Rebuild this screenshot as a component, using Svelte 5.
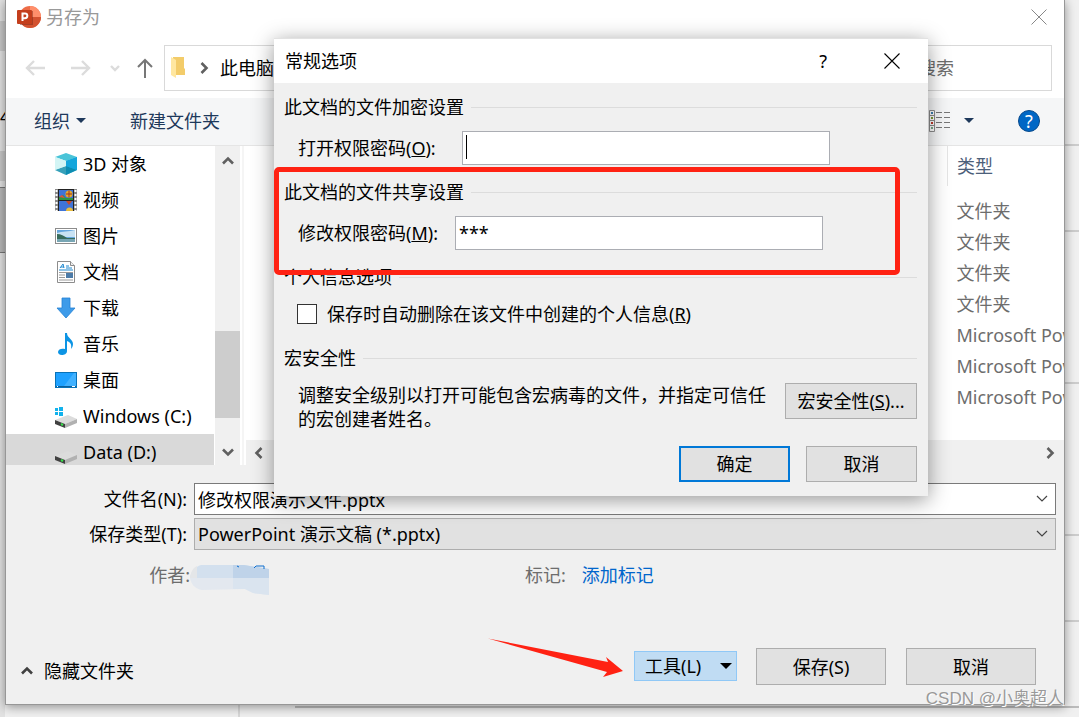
<script lang="ts">
  type Place = { icon: string; name: string; selected?: boolean };

  const places: Place[] = [
    { icon: 'cube', name: '3D 对象' },
    { icon: 'video', name: '视频' },
    { icon: 'picture', name: '图片' },
    { icon: 'document', name: '文档' },
    { icon: 'download', name: '下载' },
    { icon: 'music', name: '音乐' },
    { icon: 'desktop', name: '桌面' },
    { icon: 'system', name: 'Windows (C:)' },
    { icon: 'drive', name: 'Data (D:)', selected: true },
  ];

  const types = [
    '文件夹',
    '文件夹',
    '文件夹',
    '文件夹',
    'Microsoft PowerPoint',
    'Microsoft PowerPoint',
    'Microsoft PowerPoint',
  ];

  let fileName = $state('修改权限演示文件.pptx');
  let openPassword = $state('');
  let modifyPassword = $state('***');
  let removeInfo = $state(false);
</script>

{#snippet placeIcon(kind: string)}
  <svg class="place-icon" width="24" height="24" viewBox="0 0 24 24" aria-hidden="true">
    {#if kind === 'cube'}
      <path d="M1 5 12 1l11 4-11 4z" fill="#4ac4d8" />
      <path d="M1 5l11 4v14L1 18z" fill="#b9eef2" />
      <path d="M23 5l-11 4v14l11-5z" fill="#12a5d6" />
      <path d="M1 18l11-4 11 4-11 5z" fill="#0c86a6" opacity=".75" />
      <path d="M1 5l11 4v5L1 18z" fill="#d3f5f5" />
      <path d="M12 9l11-4v13l-11-4z" fill="#14a6dc" />
    {:else if kind === 'video'}
      <rect x="1" y="1" width="22" height="22" fill="#8a8a8a" />
      <path d="M2.500 2v21M21.500 2v21" stroke="#fff" stroke-width="2" stroke-dasharray="2 2" />
      <rect x="4" y="1" width="16" height="22" fill="#222" />
      <rect x="5" y="2" width="14" height="10" fill="#3f74d8" />
      <rect x="5" y="13" width="14" height="10" fill="#3f74d8" />
      <path d="M5 9l4-2 3 3h7v2H5z" fill="#2b9444" />
      <path d="M5 9l3-2 3 3z" fill="#e05040" />
      <circle cx="15" cy="6" r="3.500" fill="#e6a92c" />
      <path d="M15 2.500v7M12 6h6" stroke="#a33420" />
      <path d="M12 13h6l-3 4z" fill="#c94a28" />
      <path d="M12 23a3.500 3.500 0 0 1 7 0z" fill="#e9bc3c" />
    {:else if kind === 'picture'}
      <rect x="1.500" y="4.500" width="21" height="15" fill="#fff" stroke="#8c8c8c" />
      <rect x="3" y="6" width="18" height="12" fill="#66a7de" />
      <path d="M3 9c5-2 12-1 18-3v7H3z" fill="#c8e2f3" />
      <path d="M3 10c4 0 7 2 10 4h8v1H3z" fill="#386c5c" />
      <path d="M3 15h18v3H3z" fill="#78a6b4" />
    {:else if kind === 'document'}
      <path d="M3.500 1.500h13l4 4v17h-17z" fill="#fff" stroke="#8c8c8c" />
      <path d="M16.500 1.500v4h4" fill="#eee" stroke="#8c8c8c" />
      <path d="M6 8l3-4 1 4M7 7h3M12 6h3M12 8h6M5 10h14" fill="none" stroke="#1e88cf" />
      <path d="M5 12.500h14M5 15h6M5 17.500h6M5 20h14" stroke="#9a9a9a" />
      <rect x="12" y="13" width="7" height="5" fill="#4c7ba8" />
    {:else if kind === 'download'}
      <path d="M8 2h8v10h5l-9 10-9-10h5z" fill="#3e9be9" stroke="#2582d4" stroke-width=".8" />
    {:else if kind === 'music'}
      <path d="M11 1h2c0 5 6 6 6 11 0 2-1 4-2 5 1-5-1-7-4-8v10c0 3-3 4-5 4-3 0-4-2-4-3 0-3 4-4 7-3z" fill="#0c94e4" />
    {:else if kind === 'desktop'}
      <rect x="1.500" y="4.500" width="21" height="15" fill="#1ea1ff" stroke="#0872b8" />
      <path d="M10 18 20 5h2v13z" fill="#41b1ff" />
      <path d="M2 18.500h20" stroke="#0b5f9c" />
      <path d="M3 18.500h1M18 18.500h3" stroke="#fff" />
    {:else}
      {#if kind === 'system'}
        <path d="M1 4h3v3H1zM5 3h4v4H5zM1 8h3v3H1zM5 8h4v4H5z" fill="#12b2ec" />
      {/if}
      <path d="M1 16l13-5 9 4-12 5z" fill="#dcdcdc" />
      <path d="M1 16l10 4v4L1 20z" fill="#414141" />
      <path d="M11 20l12-5v4l-12 5z" fill="#b1b1b1" />
      <path d="M7 20l2 1" stroke="#36e04a" stroke-width="2" />
    {/if}
  </svg>
{/snippet}

{#snippet chevron(dir: string)}
  <svg class="chevron {dir}" width="14" height="14" viewBox="0 0 14 14" aria-hidden="true">
    <path d="M2 9.500 7 4.500l5 5" fill="none" stroke="currentColor" stroke-width="2.600" />
  </svg>
{/snippet}

<div class="screen">
  <div class="edge left" aria-hidden="true">
    <i class="band one"></i>
    <span>4</span>
    <i class="band two"></i>
    <i class="band three"></i>
  </div>
  <div class="edge right" aria-hidden="true">
    <i class="first"></i><i></i><i class="tall"></i><i class="tall"></i><i></i>
  </div>
  <div class="edge bottom" aria-hidden="true"></div>

  <main class="window">
    <header class="titlebar">
      <svg width="24" height="24" viewBox="0 0 24 24" aria-hidden="true">
        <circle cx="13" cy="12" r="11" fill="#ed6c47" />
        <path d="M13 1a11 11 0 0 1 11 11H13z" fill="#ff8f6b" />
        <path d="M2 12h22a11 11 0 0 1-22 0z" fill="#d35230" />
        <rect x="3" y="6" width="13" height="14" fill="#7c2a17" opacity=".5" />
        <rect x="0" y="5" width="15" height="14" rx="1" fill="#c43e1c" />
        <path d="M5.500 16V8.500H8a2.300 2.300 0 0 1 0 4.700H5.500" fill="none" stroke="#fff" stroke-width="2" />
      </svg>
      <h1>另存为</h1>
      <button class="plain close" aria-label="关闭">
        <svg width="16" height="16" viewBox="0 0 16 16"><path d="M.5.5l15 15M15.500.5l-15 15" stroke="#888" /></svg>
      </button>
    </header>

    <nav class="nav">
      <button class="plain" aria-label="后退" disabled>
        <svg width="20" height="20" viewBox="0 0 20 20"><path d="M20 10H2M9 3l-7 7 7 7" fill="none" stroke="#dcdcdc" stroke-width="2.400" /></svg>
      </button>
      <button class="plain forward" aria-label="前进" disabled>
        <svg width="20" height="20" viewBox="0 0 20 20"><path d="M0 10h18M11 3l7 7-7 7" fill="none" stroke="#dcdcdc" stroke-width="2.400" /></svg>
      </button>
      <button class="plain recent" aria-label="最近位置" disabled>
        <svg width="10" height="8" viewBox="0 0 10 8"><path d="M1 2l4 4 4-4" fill="none" stroke="#dcdcdc" stroke-width="2.400" /></svg>
      </button>
      <button class="plain up" aria-label="向上">
        <svg width="16" height="20" viewBox="0 0 16 20"><path d="M8 20V2M1 9l7-7 7 7" fill="none" stroke="#777" stroke-width="2" /></svg>
      </button>
      <div class="address">
        <svg width="14" height="22" viewBox="0 0 14 22" aria-hidden="true">
          <path d="M2 0h11v11l1 1v6H2z" fill="#f3cc6a" />
          <path d="M0 0l5 3v18l-5-3z" fill="#ffe7a0" />
        </svg>
        {@render chevron('next')}
        <span>此电脑</span>
      </div>
      <input class="search" type="search" placeholder="搜索" aria-label="搜索" />
    </nav>

    <div class="toolbar">
      <button class="plain">组织<i class="caret"></i></button>
      <button class="plain">新建文件夹</button>
      <button class="plain view" aria-label="视图">
        <svg width="22" height="22" viewBox="0 0 22 22">
          <path d="M.5.500h5v21h-5zM.5 5.500h5M.5 10.500h5M.5 15.500h5" fill="#fff" stroke="#8d8d8d" />
          <path d="M2 2h2v2H2z" fill="#3c7fb1" /><path d="M2 7h2v2H2z" fill="#7d9a35" />
          <path d="M2 12h2v2H2z" fill="#c0392b" /><path d="M2 17h2v2H2z" fill="#79a88a" />
          <path d="M7 2.500h15M7 7.500h15M7 12.500h15M7 17.500h15" stroke="#777" stroke-dasharray="6 2" />
        </svg>
        <i class="caret"></i>
      </button>
      <button class="help" aria-label="帮助">?</button>
    </div>

    <div class="browser">
      <ul class="places">
        {#each places as place}
          <li class:selected={place.selected}>
            {@render placeIcon(place.icon)}
            {place.name}
          </li>
        {/each}
      </ul>
      <div class="scrollbar" aria-hidden="true">
        {@render chevron('top')}
        <div class="thumb"></div>
        {@render chevron('down')}
      </div>
      <div class="files">
        <table>
          <thead>
            <tr><th>类型</th></tr>
          </thead>
          <tbody>
            {#each types as type}
              <tr><td>{type}</td></tr>
            {/each}
          </tbody>
        </table>
        <div class="hscroll" aria-hidden="true">
          {@render chevron('prev')}
          {@render chevron('next')}
        </div>
      </div>
    </div>

    <section class="form">
      <label for="file-name">文件名(N):</label>
      <div class="combo">
        <input id="file-name" type="text" bind:value={fileName} />
        <svg width="12" height="8" viewBox="0 0 12 8" aria-hidden="true"><path d="M1 1l5 5 5-5" fill="none" stroke="#444" stroke-width="1.200" /></svg>
      </div>
      <label for="file-type">保存类型(T):</label>
      <div class="combo grey">
        <select id="file-type">
          <option>PowerPoint 演示文稿 (*.pptx)</option>
        </select>
        <svg width="12" height="8" viewBox="0 0 12 8" aria-hidden="true"><path d="M1 1l5 5 5-5" fill="none" stroke="#444" stroke-width="1.200" /></svg>
      </div>
    </section>

    <div class="meta">
      <span class="author">作者:</span>
      <svg width="80" height="32" viewBox="0 0 80 32" aria-hidden="true">
        <path d="M11 2h43l25 4v9H0c1-7 5-11 11-13z" fill="#d3e0ee" />
        <path d="M0 15h79v17l-16-2-8-4-43 1C5 26 1 21 0 15z" fill="#e3e8ef" />
        <path d="M0 15c1-7 3-10 7-12v12z" fill="#e4e6e8" />
        <path d="M43 2h11l25 4v9H43z" fill="#bfd3e9" />
        <path d="M43 15h36v17l-16-2-8-4H43z" fill="#dae4ef" />
        <path d="M64 5l2-2h8v3M47 3l2 1" fill="none" stroke="#0a6cce" />
      </svg>
      <span class="tags">标记:</span>
      <a href="#tags">添加标记</a>
    </div>

    <footer class="actions">
      <button class="plain hide">{@render chevron('top')}隐藏文件夹</button>
      <div class="tools-wrap">
        <svg class="arrow" width="135" height="40" viewBox="0 0 135 40" aria-hidden="true">
          <path d="M0 .5 120 24l-2-5 17 14-20 6 4-5z" fill="#ff2213" />
        </svg>
        <button class="tools">工具(L)<i class="caret"></i></button>
      </div>
      <button class="btn wide">保存(S)</button>
      <button class="btn wide last">取消</button>
    </footer>
  </main>

  <div class="modal" role="dialog" aria-labelledby="modal-title">
    <header>
      <h2 id="modal-title">常规选项</h2>
      <button class="plain ask" aria-label="帮助">?</button>
      <button class="plain" aria-label="关闭">
        <svg width="16" height="16" viewBox="0 0 16 16"><path d="M.5.500l15 15M15.500.500l-15 15" stroke="#000" stroke-width="1.100" /></svg>
      </button>
    </header>
    <div class="options">
      <section>
        <h3>此文档的文件加密设置</h3>
        <div class="field open">
          <label for="open-pw">打开权限密码(<u>O</u>):</label>
          <div class="box">
            <i class="cursor"></i>
            <input id="open-pw" type="text" bind:value={openPassword} />
          </div>
        </div>
      </section>
      <section>
        <h3>此文档的文件共享设置</h3>
        <div class="field">
          <label for="modify-pw">修改权限密码(<u>M</u>):</label>
          <div class="box">
            <input id="modify-pw" type="text" bind:value={modifyPassword} />
          </div>
        </div>
      </section>
      <section>
        <h3>个人信息选项</h3>
        <label class="check">
          <input type="checkbox" bind:checked={removeInfo} />
          <span>保存时自动删除在该文件中创建的个人信息(<u>R</u>)</span>
        </label>
      </section>
      <section>
        <h3>宏安全性</h3>
        <div class="macro">
          <p>调整安全级别以打开可能包含宏病毒的文件，并指定可信任的宏创建者姓名。</p>
          <button class="btn">宏安全性(<u>S</u>)...</button>
        </div>
      </section>
      <div class="confirm">
        <button class="btn primary">确定</button>
        <button class="btn">取消</button>
      </div>
    </div>
    <div class="highlight"></div>
  </div>

  <span class="watermark">CSDN @小奥超人</span>
</div>

<style>
  :global(body) {
    margin: 0;
  }

  .screen,
  .screen * {
    box-sizing: border-box;
  }

  .screen {
    position: relative;
    display: flex;
    min-height: 100vh;
    padding: 0 14px 12px 5px;
    overflow: hidden;
    background: #f0f0f0;
    color: #000;
    font: 18px/24px "Noto Sans", "Noto Sans CJK SC", sans-serif;
  }

  h1, h2, h3, p, ul {
    margin: 0;
    padding: 0;
    font-size: 18px;
    font-weight: inherit;
  }

  button, input, select {
    margin: 0;
    color: inherit;
    font: inherit;
  }

  svg {
    display: block;
    flex-shrink: 0;
  }

  .plain {
    display: flex;
    align-items: center;
    padding: 0;
    border: 0;
    background: none;
  }

  .caret {
    border: 5px solid transparent;
    border-top-color: currentColor;
    border-bottom: 0;
  }

  .chevron { color: #606060; }
  .chevron.down { transform: rotate(180deg); }
  .chevron.next { transform: rotate(90deg); }
  .chevron.prev { transform: rotate(-90deg); }

  /* whatever is left of the app behind the dialog */
  .edge {
    position: absolute;
    display: flex;
    flex-direction: column;
  }

  .edge.left {
    inset: 0 auto 0 0;
    width: 5px;
    overflow: hidden;
    background: #e2e2e2;
  }

  .edge.left span {
    margin: 53px 0 23px;
    line-height: 24px;
  }

  .band { background: #c8c8c8; }
  .band.one { height: 30px; margin-top: 21px; }
  .band.two { height: 30px; }
  .band.three {
    height: 66px;
    margin-top: 6px;
    border: solid #777;
    border-width: 1px 0;
    background: #b8b8b8;
  }

  .edge.right {
    inset: 0 0 0 auto;
    width: 14px;
  }

  .edge.right i {
    height: 86px;
    border-bottom: 2px solid #ccc;
  }

  .edge.right .first { height: 146px; }
  .edge.right .tall { height: 152px; }

  .edge.bottom {
    inset: auto 0 0 238px;
    height: 12px;
    border-left: 2px solid #d8d8d8;
    background: linear-gradient(#bbb, #bbb) 55px 1px / 100% 2px no-repeat;
  }

  .window {
    position: relative;
    display: flex;
    flex: 1;
    flex-direction: column;
    min-width: 0;
    border: 1px solid #979797;
    border-top: 0;
    background: #f0f0f0;
    box-shadow: 0 2px 10px rgba(0, 0, 0, 0.4);
  }

  .titlebar {
    display: flex;
    align-items: center;
    height: 34px;
    padding: 0 17px 0 11px;
    background: #fff;
    color: #999;
  }

  .titlebar h1 { margin-left: 5px; }
  .close { margin-left: auto; }

  .nav {
    display: flex;
    align-items: center;
    height: 64px;
    padding: 11px 12px 7px 19px;
    background: #fff;
  }

  .forward { margin-left: 26px; }
  .recent { margin-left: 19px; }
  .up { margin: 0 11px 0 17px; }

  .address {
    display: flex;
    flex: 1;
    align-items: center;
    gap: 12px;
    height: 46px;
    padding-left: 6px;
    border: 1px solid #d9d9d9;
  }

  .address span { margin-left: -3px; }

  .search {
    width: 172px;
    height: 46px;
    margin-left: 12px;
    padding: 0 0 0 37px;
    border: 1px solid #d9d9d9;
    border-radius: 0;
    background: #fff;
    appearance: none;
  }

  .search::placeholder { color: #6d6d6d; }

  .toolbar {
    display: flex;
    align-items: center;
    height: 48px;
    padding: 0 24px 2px 28px;
    border-bottom: 1px solid #e5e5e5;
    background: #f5f6f7;
    color: #1e395b;
  }

  .toolbar .plain { gap: 6px; margin-right: 44px; }
  .toolbar .view { gap: 13px; margin: 0 44px 0 auto; }

  .help {
    width: 22px;
    height: 22px;
    padding: 0;
    border: 1px solid #084a8c;
    border-radius: 50%;
    background: #0067c5;
    color: #fff;
    line-height: 20px;
  }

  .browser {
    display: flex;
    height: 319px;
    background: #fff;
  }

  .places {
    width: 208px;
    overflow: hidden;
    list-style: none;
  }

  .places li {
    display: flex;
    align-items: center;
    height: 36px;
    padding-left: 48px;
    white-space: nowrap;
  }

  .place-icon { margin-right: 5px; }
  .selected { background: #d9d9d9; }

  .scrollbar {
    display: flex;
    flex-direction: column;
    align-items: center;
    width: 25px;
    margin-left: 1px;
    padding: 8px 0 6px;
    background: #f0f0f0;
  }

  .thumb {
    width: 100%;
    height: 87px;
    margin: auto 0 27px;
    background: #cdcdcd;
  }

  .files {
    display: flex;
    flex: 1;
    flex-direction: column;
    min-width: 0;
    margin-left: 2px;
    border-left: 2px solid #f5f5f5;
    padding-left: 2px;
  }

  table {
    width: 117px;
    margin-left: auto;
    border-collapse: collapse;
    table-layout: fixed;
  }

  th, td {
    padding: 0 0 0 9px;
    overflow: hidden;
    font-weight: inherit;
    text-align: left;
    white-space: nowrap;
  }

  th {
    height: 40px;
    border-left: 1px solid #e5e5e5;
    color: #4c607a;
  }

  td {
    height: 31px;
    color: #6d6d6d;
  }

  tbody::before {
    display: block;
    height: 9px;
    content: '';
  }

  .hscroll {
    display: flex;
    align-items: center;
    justify-content: space-between;
    height: 25px;
    margin-top: auto;
    padding: 0 7px 0 6px;
    background: #f0f0f0;
  }

  .form {
    display: grid;
    grid-template-columns: 181px 1fr;
    gap: 3px 7px;
    align-items: center;
    padding: 18px 8px 0 0;
  }

  .form label { text-align: right; }

  .combo {
    display: flex;
    align-items: center;
    height: 32px;
    padding: 0 7px 0 3px;
    border: 1px solid #7a7a7a;
    background: #fff;
  }

  .combo.grey {
    border-color: #adadad;
    background: #e1e1e1;
  }

  .combo input,
  .combo select {
    flex: 1;
    min-width: 0;
    height: 30px;
    padding: 0;
    border: 0;
    outline: 0;
    background: none;
    appearance: none;
  }

  .meta {
    display: flex;
    align-items: flex-start;
    height: 32px;
    margin-top: 13px;
    color: #6d6d6d;
  }

  .author {
    width: 184px;
    text-align: right;
  }

  .tags { margin: 0 16px 0 255px; }

  .meta a {
    color: #0066cc;
    text-decoration: none;
  }

  .actions {
    display: flex;
    align-items: flex-end;
    gap: 19px;
    margin-top: auto;
    padding: 0 28px 19px 14px;
  }

  .hide {
    gap: 10px;
    margin-right: auto;
    line-height: 28px;
  }

  .hide .chevron { color: #404040; }

  .tools-wrap {
    position: relative;
    padding-bottom: 4px;
  }

  .arrow {
    position: absolute;
    right: calc(100% + 11px);
    bottom: 7px;
  }

  .tools {
    display: flex;
    align-items: center;
    justify-content: space-between;
    width: 103px;
    height: 30px;
    padding: 0 4px 0 10px;
    border: 1px solid #90c8f6;
    background: #c0dcf3;
  }

  .tools .caret { border-width: 6px 6px 0; }

  .btn {
    flex-shrink: 0;
    height: 36px;
    padding: 0;
    border: 1px solid #adadad;
    background: #e1e1e1;
  }

  .btn.wide {
    width: 130px;
    height: 37px;
  }

  .btn.last { margin-left: 1px; }

  .modal {
    position: absolute;
    top: 38px;
    left: 274px;
    width: 654px;
    border-top: 1px solid #e2e2e2;
    background: #f0f0f0;
    box-shadow: 0 4px 20px rgba(0, 0, 0, 0.42);
  }

  .modal header {
    display: flex;
    align-items: center;
    height: 44px;
    padding: 0 28px 1px 11px;
    background: #fff;
  }

  .ask { margin: 0 57px 0 auto; }

  .options {
    display: flex;
    flex-direction: column;
    gap: 15px;
    padding: 12px 11px 14px 10px;
  }

  .options h3 {
    display: flex;
    align-items: center;
    gap: 7px;
    margin-bottom: 12px;
  }

  .options h3::after {
    flex: 1;
    height: 1px;
    background: #dcdcdc;
    content: '';
  }

  .field {
    display: flex;
    align-items: center;
    padding-left: 14px;
  }

  .field label { width: 157px; }
  .field.open label { width: 164px; }

  .box {
    display: flex;
    width: 368px;
    height: 34px;
    padding: 3px;
    border: 1px solid #abadb3;
    background: #fff;
  }

  .box input {
    flex: 1;
    min-width: 0;
    padding: 0;
    border: 0;
    outline: 0;
    background: none;
  }

  .cursor {
    width: 1px;
    height: 24px;
    background: #000;
  }

  .check {
    display: flex;
    align-items: center;
    gap: 10px;
    height: 30px;
    padding: 0 0 4px 13px;
  }

  .check input {
    width: 20px;
    height: 20px;
    border: 1px solid #333;
    background: #fff;
    appearance: none;
  }

  .check input:checked { background: #0078d7; }

  .macro {
    display: flex;
    align-items: flex-start;
    justify-content: space-between;
    padding: 1px 0 0 14px;
  }

  .macro p { width: 472px; }
  .macro .btn { width: 132px; }

  .confirm {
    display: flex;
    justify-content: flex-end;
    gap: 16px;
  }

  .confirm .btn { width: 111px; }
  .confirm .primary { border: 2px solid #0078d7; }

  .highlight {
    position: absolute;
    top: 128px;
    left: 0;
    width: 626px;
    height: 108px;
    border: 5px solid #ff2213;
    border-radius: 5px;
    pointer-events: none;
  }

  .watermark {
    position: absolute;
    right: 15px;
    bottom: 6px;
    color: #999;
    font-family: "Liberation Sans", "Noto Sans CJK SC", sans-serif;
    font-size: 17px;
    text-shadow: 1px 1px #fff;
  }
</style>
